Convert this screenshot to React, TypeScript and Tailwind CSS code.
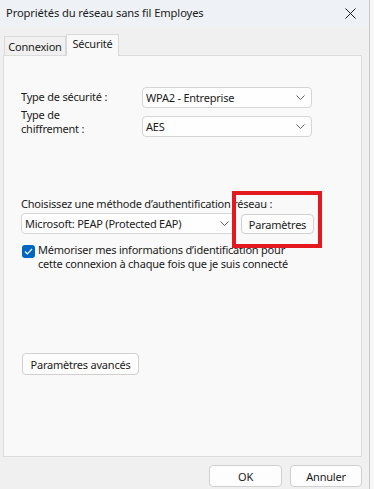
const Chevron = () => (
  <svg width="9" height="5" viewBox="0 0 9 5" fill="none">
    <path d="M0.5 0.5L4.5 4.5L8.5 0.5" stroke="#5f5f5f" strokeWidth="1" />
  </svg>
);

const Combo = ({ value, className }: { value: string; className: string }) => (
  <div
    className={`flex items-center justify-between rounded-[4px] border border-[#d5d5d5] bg-[#fefefe] pl-[3px] pr-[6px] ${className}`}
  >
    <span className="leading-none">{value}</span>
    <Chevron />
  </div>
);

const Button = ({ label, className }: { label: string; className: string }) => (
  <div
    className={`flex items-center justify-center rounded-[4px] border border-[#d0d0d0] bg-[#fdfdfd] leading-none ${className}`}
  >
    {label}
  </div>
);

export default function App() {
  return (
    <div
      className="relative flex h-[489px] w-[374px] overflow-hidden bg-[#f7f7f7] text-[11px] tracking-[-0.22px] text-[#1b1b1b]"
      style={{ fontFamily: '"Segoe UI", "Noto Sans", sans-serif' }}
    >
      <div className="flex h-full w-[370px] flex-col border-r border-[#c9c9c9] bg-[#f0f0f0]">
        {/* Title bar */}
        <div className="flex h-[27px] items-center justify-between bg-[#eef2f6] pl-[6px] pr-[13px]">
          <span className="text-[11.2px] tracking-[-0.12px]">Propriétés du réseau sans fil Employes</span>
          <svg width="11" height="11" viewBox="0 0 11 11" fill="none">
            <path d="M0.5 0.5L10.5 10.5M10.5 0.5L0.5 10.5" stroke="#1b1b1b" strokeWidth="1" />
          </svg>
        </div>

        {/* Tabs */}
        <div className="mt-[7px] flex items-end pl-[4px]">
          <div className="flex h-[19px] w-[62px] items-center justify-center border border-b-0 border-[#d9d9d9] bg-[#f0f0f0] pt-[2px]">
            Connexion
          </div>
          <div className="relative z-10 -mb-px flex h-[22px] w-[53px] items-center justify-center border border-b-0 border-[#d9d9d9] bg-[#f9f9f9] pb-[3px]">
            Sécurité
          </div>
        </div>

        {/* Panel */}
        <div className="ml-[3px] flex h-[402px] w-[359px] flex-col border border-[#dcdcdc] bg-[#f9f9f9] pl-[17px] pt-[31px]">
          <div className="flex items-center">
            <span className="w-[121px]">Type de sécurité :</span>
            <Combo value="WPA2 - Entreprise" className="h-[21px] w-[170px]" />
          </div>
          <div className="flex items-end">
            <span className="w-[121px] pb-[1px] leading-[14px]">
              Type de
              <br />
              chiffrement :
            </span>
            <Combo value="AES" className="h-[21px] w-[170px]" />
          </div>

          <div className="mt-[59px] leading-[15px]">
            Choisissez une méthode d’authentification réseau :
          </div>
          <div className="mt-[1px] flex items-center gap-[5px]">
            <Combo value="Microsoft: PEAP (Protected EAP)" className="h-[21px] w-[215px]" />
            <Button label="Paramètres" className="mt-[2px] h-[20px] w-[73px]" />
          </div>

          <div className="mt-[9px] flex gap-[3px] pl-[1px]">
            <div className="mt-[2px] flex h-[13px] w-[13px] items-center justify-center rounded-[3px] bg-[#0067c0]">
              <svg width="9" height="7" viewBox="0 0 9 7" fill="none">
                <path d="M1 3.5L3.3 5.8L8 1" stroke="white" strokeWidth="1.2" />
              </svg>
            </div>
            <span className="leading-[13.5px]">
              Mémoriser mes informations d’identification pour
              <br />
              cette connexion à chaque fois que je suis connecté
            </span>
          </div>

          <Button label="Paramètres avancés" className="ml-[1px] mt-[83px] h-[22px] w-[117px]" />
        </div>

        {/* Footer */}
        <div className="mt-[8px] flex justify-end gap-[8px] pr-[7px]">
          <Button label="OK" className="h-[22px] w-[73px] border-[#0067c0]" />
          <Button label="Annuler" className="h-[22px] w-[72px]" />
        </div>
      </div>

      {/* Red highlight */}
      <div className="absolute left-[232px] top-[191px] h-[57px] w-[90px] border-[4px] border-[#e3191f]" />
    </div>
  );
}
